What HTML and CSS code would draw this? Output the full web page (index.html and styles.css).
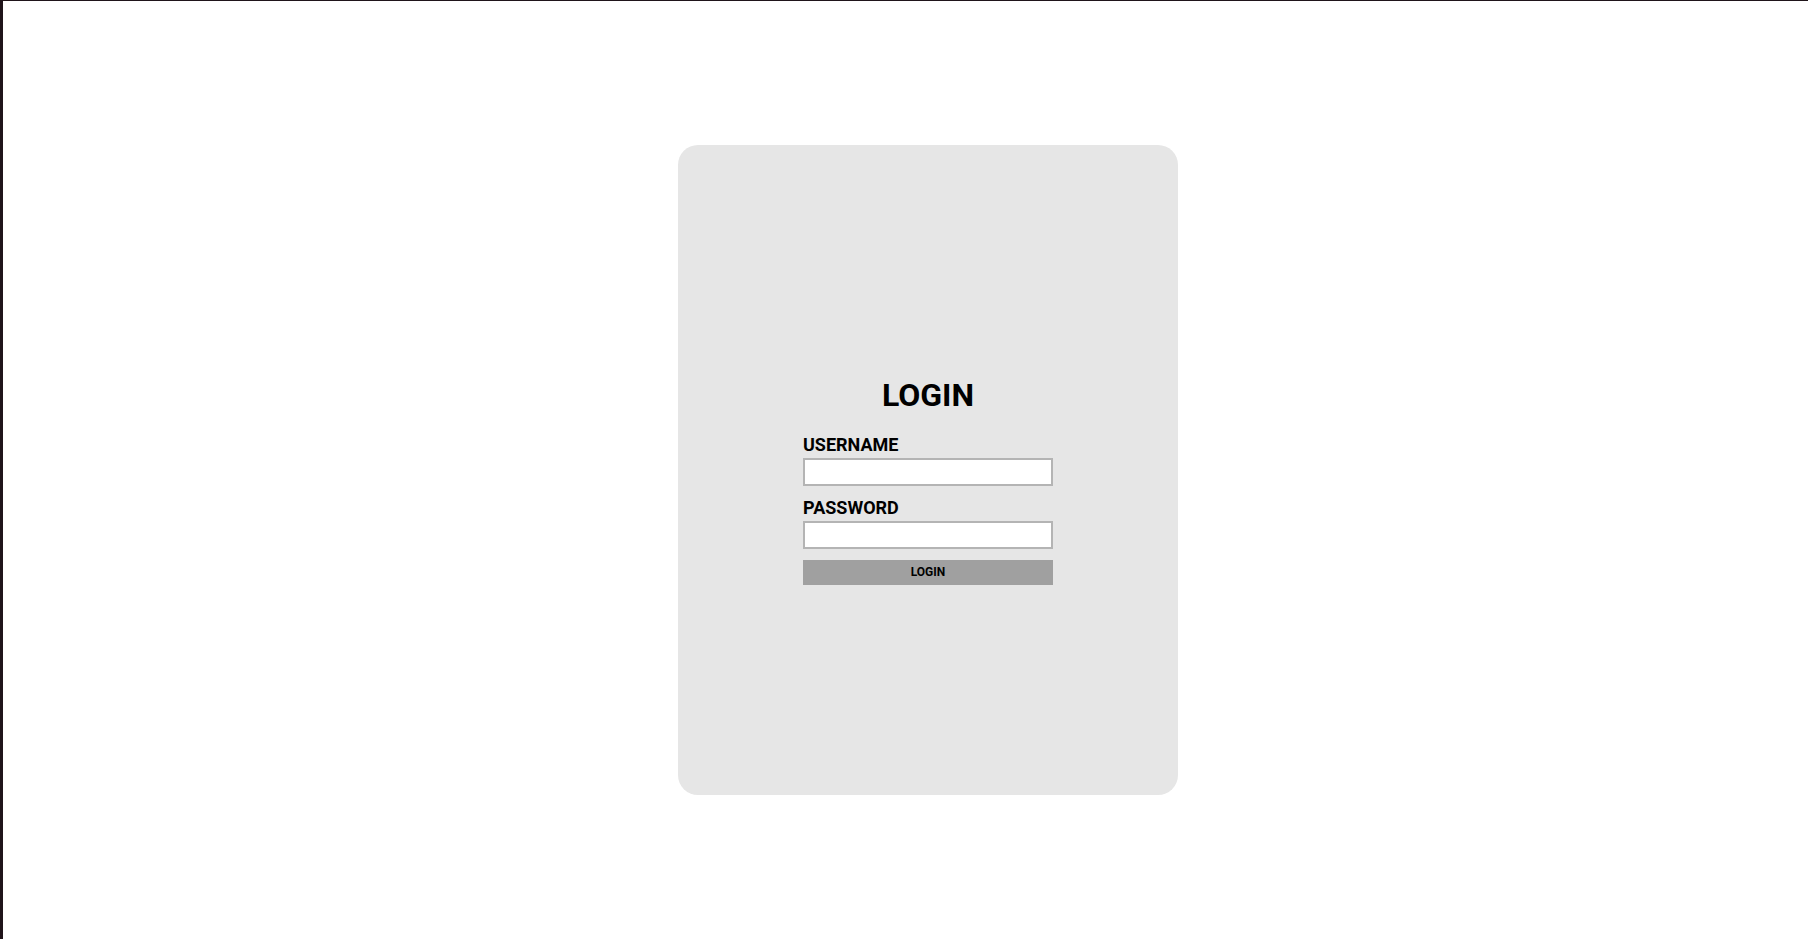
FILE: index.html
```html
<!DOCTYPE html>
<html lang="en">
<head>
<meta charset="utf-8">
<title>Login</title>
<link rel="stylesheet" href="styles.css">
</head>
<body>
<main class="page">
  <section class="card">
    <form class="login-form" onsubmit="return false">
      <h1 class="title">LOGIN</h1>
      <label class="field-label" for="username">USERNAME</label>
      <input class="field-input" id="username" type="text">
      <label class="field-label" for="password">PASSWORD</label>
      <input class="field-input" id="password" type="password">
      <button class="submit" type="submit">LOGIN</button>
    </form>
  </section>
</main>
</body>
</html>
```
FILE: styles.css
```css
html, body {
  margin: 0;
  padding: 0;
  height: 100%;
}

body {
  background: #ffffff;
  font-family: Roboto, "Liberation Sans", Arial, sans-serif;
  color: #000;
  box-sizing: border-box;
  border-top: 1px solid #1f141a;
  border-left: 3px solid #1f141a;
  overflow: hidden;
}

.page {
  height: 100%;
  display: flex;
  align-items: center;
  justify-content: center;
  padding-left: 45px;
  box-sizing: border-box;
}

.card {
  width: 500px;
  height: 650px;
  background: #e6e6e6;
  border-radius: 20px;
  display: flex;
  align-items: center;
  justify-content: center;
}

.login-form {
  width: 250px;
  display: flex;
  flex-direction: column;
  padding-top: 21px;
}

.title {
  margin: 0 0 20px;
  font-size: 32px;
  line-height: 37px;
  font-weight: 700;
  text-align: center;
}

.field-label {
  display: block;
  font-size: 18px;
  line-height: 21px;
  font-weight: 700;
  margin-bottom: 3px;
}

.field-input {
  display: block;
  width: 250px;
  height: 28px;
  box-sizing: border-box;
  border: 2px solid #b4b4b4;
  background: #ffffff;
  margin: 0 0 11px;
  padding: 0 4px;
  font-family: inherit;
  outline: none;
}

.submit {
  display: block;
  width: 250px;
  height: 25px;
  margin: 0;
  border: none;
  background: #a0a0a0;
  color: #000;
  font-family: inherit;
  font-size: 12px;
  font-weight: 700;
  padding: 0;
  cursor: pointer;
}
```
